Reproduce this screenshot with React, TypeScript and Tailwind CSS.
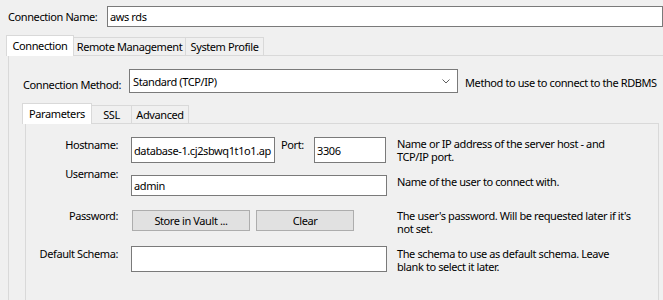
import React from 'react';

const Tab = ({ label, active, w }: { label: string; active?: boolean; w: number }) => (
  <div
    style={{ width: w }}
    className={
      active
        ? 'relative z-10 -mb-px h-[21px] border border-b-0 border-[#d9d9d9] bg-white pt-[2px] text-center'
        : '-ml-px h-[18px] border border-b-0 border-[#d9d9d9] bg-[#f0f0f0] pt-[1px] text-center'
    }
  >
    {label}
  </div>
);

const Desc = ({ lines }: { lines: string[] }) => (
  <div className="leading-[13px]">
    {lines.map((l) => (
      <div key={l}>{l}</div>
    ))}
  </div>
);

const Field = ({ className, children }: { className: string; children?: React.ReactNode }) => (
  <div className={`flex items-center overflow-hidden border border-[#7a7a7a] bg-white pl-[2px] ${className}`}>{children}</div>
);

const App = () => {
  return (
    <div className="h-[300px] w-[663px] overflow-hidden whitespace-nowrap bg-[#f0f0f0] font-['Noto_Sans',sans-serif] text-[11px] leading-[15px] tracking-[-0.4px] text-black">
      {/* Connection name */}
      <div className="flex items-center pl-[8px] pt-[6px]">
        <div className="w-[99px]">Connection Name:</div>
        <Field className="h-[21px] flex-1">aws rds</Field>
      </div>

      {/* Outer tabs */}
      <div className="ml-[6px] mt-[8px] flex items-end">
        <Tab label="Connection" active w={68} />
        <Tab label="Remote Management" w={113} />
        <Tab label="System Profile" w={79} />
      </div>

      <div className="ml-[8px] h-[300px] border-l border-t border-[#d9d9d9] pl-[14px] pt-[13px]">
        {/* Connection method */}
        <div className="flex h-[24px] items-start">
          <div className="w-[106px] pt-[8px]">Connection Method:</div>
          <div className="flex h-[24px] w-[329px] items-center justify-between border border-[#7a7a7a] bg-white pl-[3px] pr-[7px]">
            <span>Standard (TCP/IP)</span>
            <svg width="8" height="5" viewBox="0 0 8 5">
              <polyline points="0.5,0.5 4,4 7.5,0.5" fill="none" stroke="#606060" strokeWidth="1" />
            </svg>
          </div>
          <div className="ml-[7px] pt-[6px]">Method to use to connect to the RDBMS</div>
        </div>

        {/* Inner tabs */}
        <div className="-ml-[1px] mt-[10px] flex items-end">
          <Tab label="Parameters" active w={70} />
          <Tab label="SSL" w={41} />
          <Tab label="Advanced" w={58} />
        </div>

        <div className="ml-[2px] h-[200px] w-[634px] border-l border-r border-t border-[#d9d9d9] pt-[13px]">
          {/* Hostname */}
          <div className="flex items-start">
            <div className="w-[92px] text-right">Hostname:</div>
            <div className="ml-[13px] flex w-[256px] items-start">
              <Field className="h-[26px] w-[144px]">database-1.cj2sbwq1t1o1.ap</Field>
              <div className="w-[39px] pl-[6px]">Port:</div>
              <Field className="h-[26px] w-[72px]">3306</Field>
            </div>
            <div className="ml-[10px]">
              <Desc lines={['Name or IP address of the server host - and', 'TCP/IP port.']} />
            </div>
          </div>

          {/* Username */}
          <div className="mt-[3px] flex items-start">
            <div className="w-[92px] text-right">Username:</div>
            <Field className="ml-[13px] mt-[9px] h-[21px] w-[256px]">admin</Field>
            <div className="ml-[10px] mt-[9px]">
              <Desc lines={['Name of the user to connect with.']} />
            </div>
          </div>

          {/* Password */}
          <div className="mt-[12px] flex items-start">
            <div className="w-[92px] text-right">Password:</div>
            <div className="ml-[13px] mt-[2px] flex w-[256px] gap-[6px] pl-[1px]">
              <button className="h-[21px] w-[118px] border border-[#adadad] bg-[#e1e1e1]">Store in Vault ...</button>
              <button className="h-[21px] w-[98px] border border-[#adadad] bg-[#e1e1e1]">Clear</button>
            </div>
            <div className="ml-[10px] pt-[1px]">
              <Desc lines={["The user's password. Will be requested later if it's", 'not set.']} />
            </div>
          </div>

          {/* Default schema */}
          <div className="mt-[11px] flex items-start">
            <div className="w-[92px] text-right">Default Schema:</div>
            <Field className="ml-[13px] h-[26px] w-[256px]" />
            <div className="ml-[10px] pt-[1px]">
              <Desc lines={['The schema to use as default schema. Leave', 'blank to select it later.']} />
            </div>
          </div>
        </div>
      </div>
    </div>
  );
};

export default App;
